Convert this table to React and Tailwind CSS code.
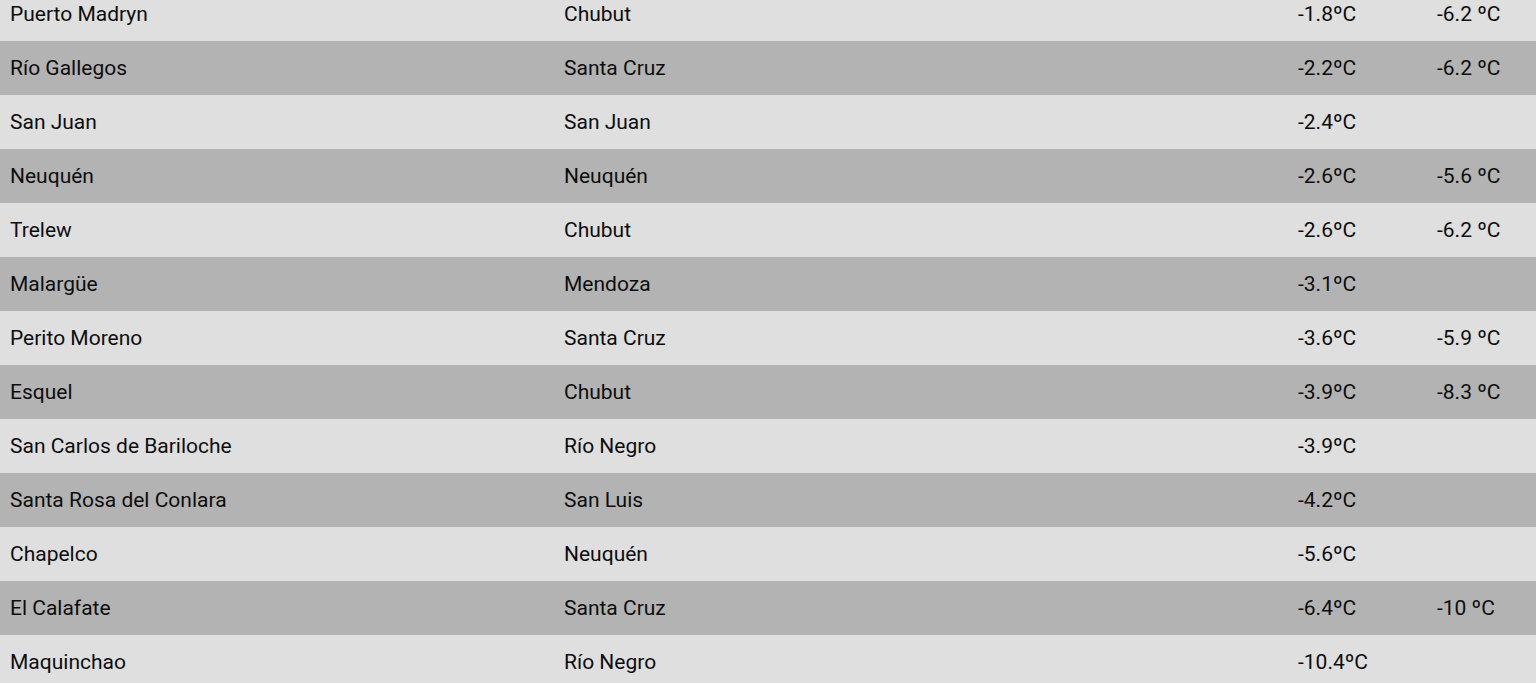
const rows = [
  ['Puerto Madryn', 'Chubut', '-1.8ºC', '-6.2 ºC'],
  ['Río Gallegos', 'Santa Cruz', '-2.2ºC', '-6.2 ºC'],
  ['San Juan', 'San Juan', '-2.4ºC', ''],
  ['Neuquén', 'Neuquén', '-2.6ºC', '-5.6 ºC'],
  ['Trelew', 'Chubut', '-2.6ºC', '-6.2 ºC'],
  ['Malargüe', 'Mendoza', '-3.1ºC', ''],
  ['Perito Moreno', 'Santa Cruz', '-3.6ºC', '-5.9 ºC'],
  ['Esquel', 'Chubut', '-3.9ºC', '-8.3 ºC'],
  ['San Carlos de Bariloche', 'Río Negro', '-3.9ºC', ''],
  ['Santa Rosa del Conlara', 'San Luis', '-4.2ºC', ''],
  ['Chapelco', 'Neuquén', '-5.6ºC', ''],
  ['El Calafate', 'Santa Cruz', '-6.4ºC', '-10 ºC'],
  ['Maquinchao', 'Río Negro', '-10.4ºC', ''],
];

export default function App() {
  return (
    <div className="h-[683px] overflow-hidden bg-[#dfdfdf] font-['Roboto',sans-serif] text-[21px] text-[#0d0d0d]">
      <div className="-mt-[13px]">
        {rows.map((r, i) => (
          <div
            key={i}
            className={`grid h-[54px] grid-cols-[554px_734px_139px_1fr] items-center pt-[2px] ${i % 2 === 1 ? 'bg-[#b3b3b3]' : 'bg-[#dfdfdf]'}`}
          >
            {r.map((c, j) => (
              <div key={j} className="px-[10px] whitespace-nowrap">
                {c}
              </div>
            ))}
          </div>
        ))}
      </div>
    </div>
  );
}
